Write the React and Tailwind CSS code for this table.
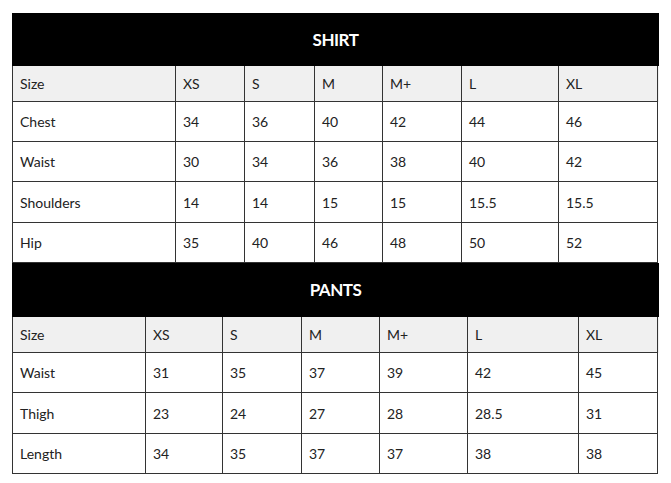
import React from "react";

const shirt = {
  title: "SHIRT",
  cols: "grid-cols-[164px_69px_70px_68px_79px_97px_99px]",
  head: ["Size", "XS", "S", "M", "M+", "L", "XL"],
  rows: [
    ["Chest", "34", "36", "40", "42", "44", "46"],
    ["Waist", "30", "34", "36", "38", "40", "42"],
    ["Shoulders", "14", "14", "15", "15", "15.5", "15.5"],
    ["Hip", "35", "40", "46", "48", "50", "52"],
  ],
  heights: ["h-[40px]", "h-[40px]", "h-[41px]", "h-[40px]"],
  bar: "h-[53px]",
};

const pants = {
  title: "PANTS",
  cols: "grid-cols-[134px_77px_79px_78px_88px_111px_79px]",
  head: ["Size", "XS", "S", "M", "M+", "L", "XL"],
  rows: [
    ["Waist", "31", "35", "37", "39", "42", "45"],
    ["Thigh", "23", "24", "27", "28", "28.5", "31"],
    ["Length", "34", "35", "37", "37", "38", "38"],
  ],
  heights: ["h-[40px]", "h-[41px]", "h-[40px]"],
  bar: "h-[54px]",
};

function Row({ cells, cols, height, shade }) {
  return (
    <div className={`grid ${cols} ${height} ${shade ? "bg-[#f0f0f0]" : "bg-white"}`}>
      {cells.map((c, i) => (
        <div
          key={i}
          className={`flex items-center pl-[7px] border-b border-r border-[#333] ${i === 0 ? "border-l" : ""}`}
        >
          {c}
        </div>
      ))}
    </div>
  );
}

function SizeTable({ data }) {
  return (
    <div>
      <div className={`${data.bar} bg-black flex items-center justify-center`}>
        <span className="text-white font-bold text-[17px] tracking-[-0.5px]">{data.title}</span>
      </div>
      <Row cells={data.head} cols={data.cols} height="h-[36px]" shade />
      {data.rows.map((r, i) => (
        <Row key={i} cells={r} cols={data.cols} height={data.heights[i]} />
      ))}
    </div>
  );
}

export default function App() {
  return (
    <div
      className="w-[671px] h-[483px] bg-white pt-[13px] pl-[12px] text-[14px] text-[#222]"
      style={{ fontFamily: "Lato, 'Liberation Sans', sans-serif" }}
    >
      <div className="w-[647px]">
        <SizeTable data={shirt} />
        <SizeTable data={pants} />
      </div>
    </div>
  );
}
